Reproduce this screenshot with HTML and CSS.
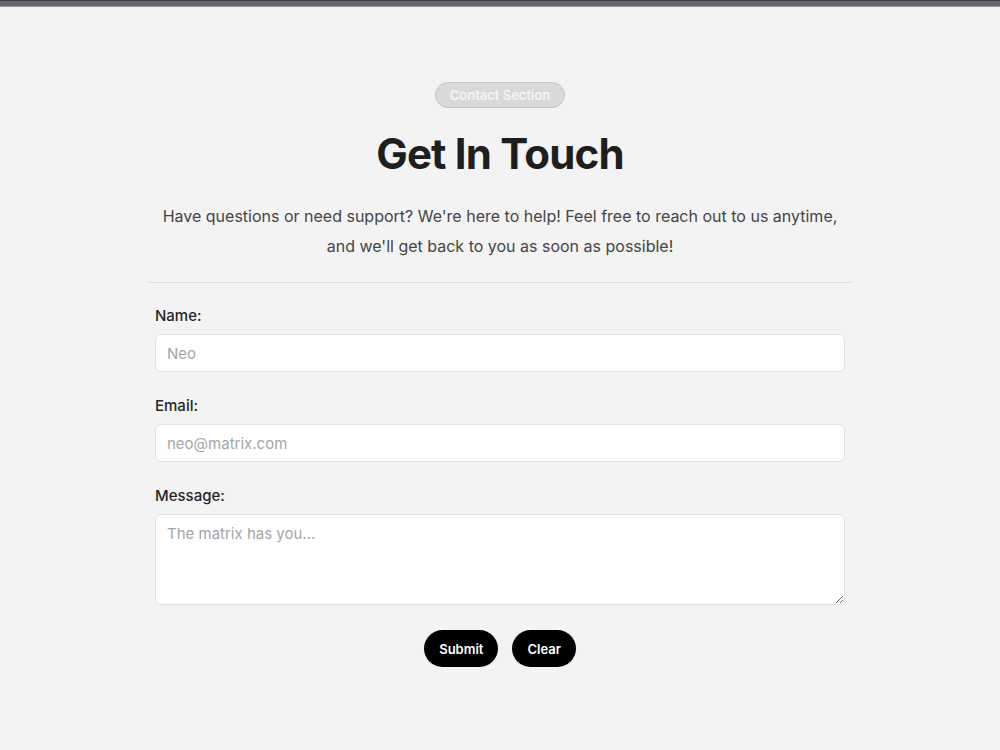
FILE: index.html
```html
<!DOCTYPE html>
<html lang="en">
<head>
<meta charset="utf-8">
<title>Contact</title>
<link rel="stylesheet" href="styles.css">
</head>
<body>
<div class="topbar"></div>
<main class="contact">
  <div class="badge">Contact Section</div>
  <h1 class="title">Get In Touch</h1>
  <p class="lead">Have questions or need support? We're here to help! Feel free to reach out to us anytime, and we'll get back to you as soon as possible!</p>
  <hr class="divider">
  <form class="form">
    <label class="field">
      <span class="label">Name:</span>
      <input class="input" type="text" placeholder="Neo">
    </label>
    <label class="field">
      <span class="label">Email:</span>
      <input class="input" type="email" placeholder="neo@matrix.com">
    </label>
    <label class="field">
      <span class="label">Message:</span>
      <textarea class="input textarea" placeholder="The matrix has you..."></textarea>
    </label>
    <div class="actions">
      <button class="btn" type="button">Submit</button>
      <button class="btn" type="reset">Clear</button>
    </div>
  </form>
</main>
</body>
</html>
```
FILE: styles.css
```css
* { box-sizing: border-box; }
html, body { margin: 0; padding: 0; }
body {
  background: #f3f3f3;
  font-family: Inter, "Noto Sans", sans-serif;
  color: #1f1f1f;
}
.topbar {
  height: 7px;
  background: #68686e;
  border-top: 1px solid #3c3c40;
  border-bottom: 1px solid #9a9aa2;
}
.contact {
  width: 704px;
  margin: 0 auto;
  padding-top: 75px;
  display: flex;
  flex-direction: column;
  align-items: center;
}
.badge {
  height: 26px;
  padding: 0 14px;
  display: flex;
  align-items: center;
  border-radius: 13px;
  background: #d9d9d9;
  border: 1px solid #c6c6c6;
  color: #f4f4f4;
  font-size: 13px;
  font-weight: 600;
}
.title {
  margin: 19px 0 0;
  font-size: 42px;
  line-height: 53px;
  font-weight: 700;
  letter-spacing: -0.8px;
  color: #1e1e1e;
}
.lead {
  margin: 21px 0 0;
  font-size: 16px;
  line-height: 30px;
  color: #454545;
  text-align: center;
  padding: 0;
}
.divider {
  width: 100%;
  margin: 21px 0 0;
  border: 0;
  border-top: 1px solid #dedede;
}
.form {
  width: 100%;
  padding: 24px 7px 0;
  display: flex;
  flex-direction: column;
}
.field {
  display: flex;
  flex-direction: column;
  margin-bottom: 25px;
}
.label {
  font-size: 15px;
  font-weight: 500;
  line-height: 18px;
  color: #262626;
  margin-bottom: 9px;
}
.input {
  height: 38px;
  width: 100%;
  border: 1px solid #e2e2e2;
  border-radius: 6px;
  background: #fff;
  padding: 0 11px;
  font-family: Inter, "Noto Sans", sans-serif;
  font-size: 15px;
  color: #222;
}
.input::placeholder { color: #a5a5a5; }
.textarea {
  height: 91px;
  padding: 9px 11px;
  resize: vertical;
  display: block;
}
.actions {
  display: flex;
  justify-content: center;
  gap: 14px;
  margin-top: 0;
}
.btn {
  height: 37px;
  padding: 0 15px;
  border: 0;
  border-radius: 19px;
  background: #000;
  color: #fff;
  font-family: Inter, "Noto Sans", sans-serif;
  font-size: 13px;
  font-weight: 600;
}
```
